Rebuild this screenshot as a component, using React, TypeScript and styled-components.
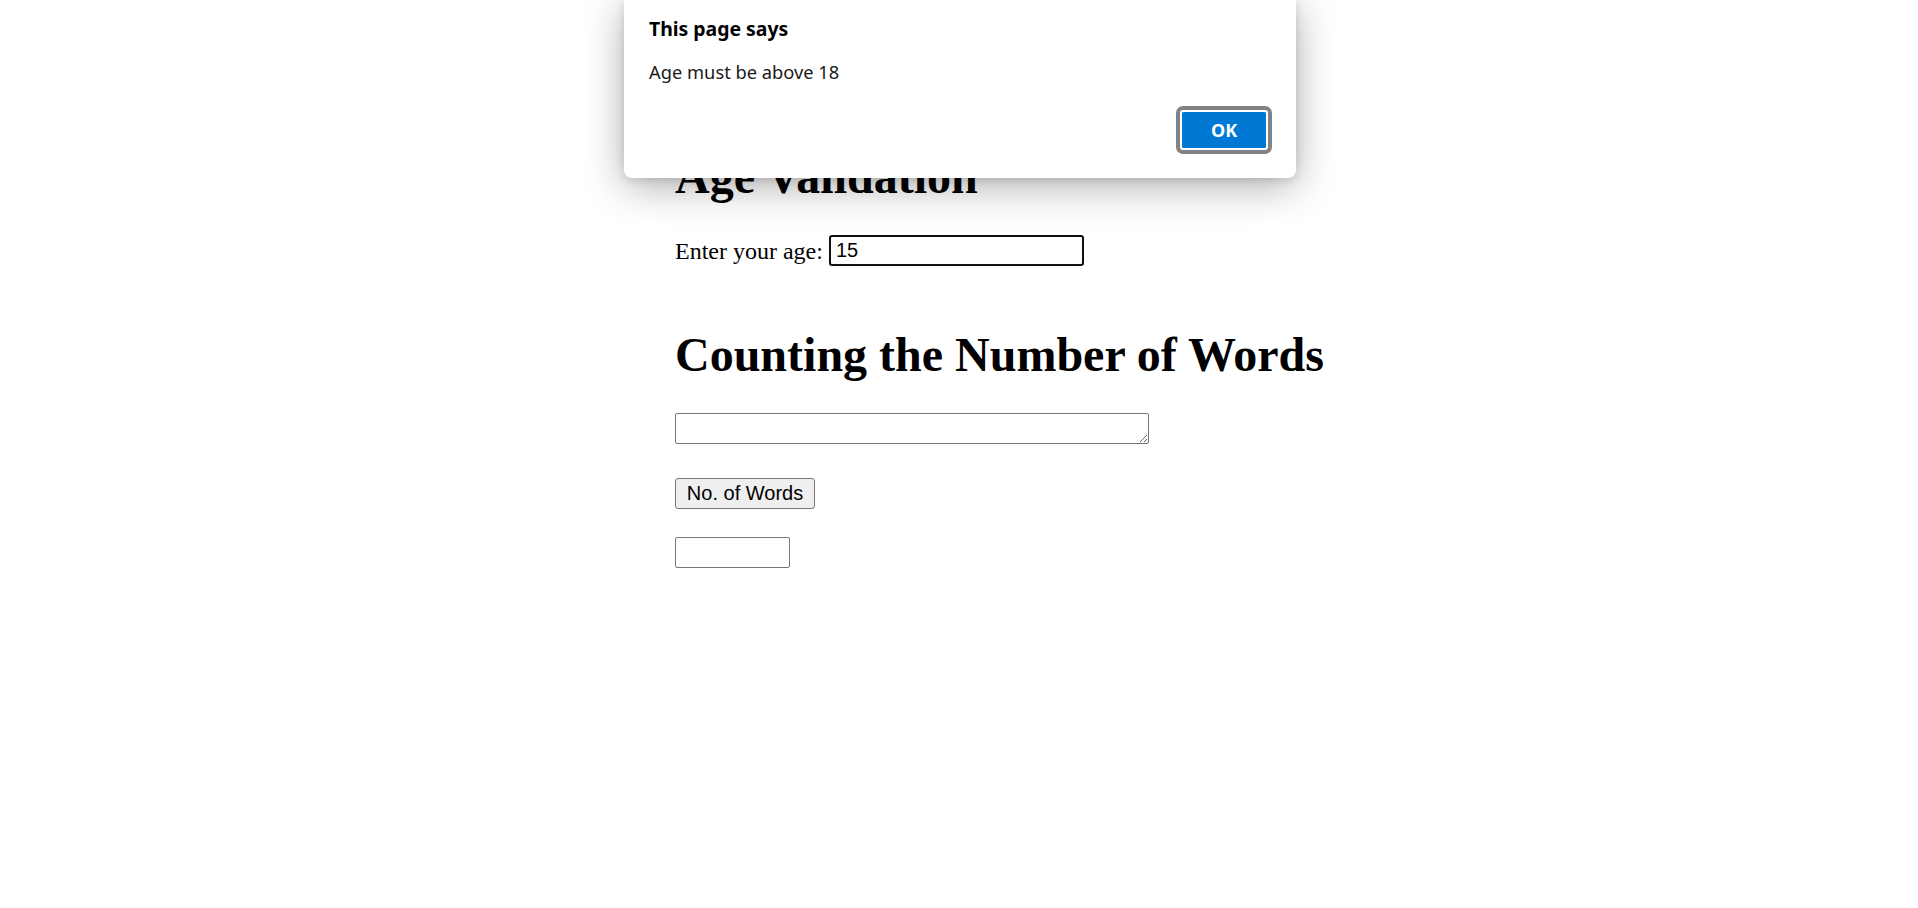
import React from "react";
import styled, { createGlobalStyle } from "styled-components";

const GlobalStyle = createGlobalStyle`
  html, body {
    margin: 0;
    padding: 0;
    background: #ffffff;
  }
  body {
    font-family: "Liberation Serif", "Times New Roman", serif;
    color: #000000;
  }
`;

const Page = styled.div`
  position: relative;
  width: 1918px;
  height: 908px;
  overflow: hidden;
  background: #ffffff;
`;

const Main = styled.main`
  margin-left: 675px;
  padding-top: 150px;
  display: flex;
  flex-direction: column;
  align-items: flex-start;
`;

const Heading = styled.h1`
  font-family: "Liberation Serif", "Times New Roman", serif;
  font-size: 48px;
  font-weight: bold;
  line-height: 53px;
  margin: 0 0 32px 0;
`;

const AgeRow = styled.div`
  display: flex;
  align-items: center;
  gap: 6px;
  height: 31px;
  margin-bottom: 62px;
  font-size: 24px;
`;

const Label = styled.label`
  font-family: "Liberation Serif", "Times New Roman", serif;
  font-size: 24px;
  line-height: 28px;
`;

const AgeInput = styled.input`
  box-sizing: border-box;
  width: 255px;
  height: 31px;
  border: 2px solid #101010;
  border-radius: 3px;
  padding: 0 5px;
  font-family: "Liberation Sans", Arial, sans-serif;
  font-size: 20px;
  color: #000;
  outline: none;
`;

const WordsArea = styled.textarea`
  display: block;
  box-sizing: border-box;
  width: 474px;
  height: 31px;
  border: 1px solid #767676;
  border-radius: 2px;
  padding: 2px 3px;
  margin: 0 0 34px 0;
  font-family: "Liberation Mono", monospace;
  font-size: 20px;
  outline: none;
`;

const CountButton = styled.button`
  display: block;
  box-sizing: border-box;
  width: 140px;
  height: 31px;
  margin: 0 0 28px 0;
  padding: 0;
  border: 1px solid #767676;
  border-radius: 3px;
  background: #efefef;
  color: #000;
  font-family: "Liberation Sans", Arial, sans-serif;
  font-size: 20px;
  text-align: center;
`;

const ResultInput = styled.input`
  display: block;
  box-sizing: border-box;
  width: 115px;
  height: 31px;
  border: 1px solid #767676;
  border-radius: 2px;
  padding: 0 3px;
  font-family: "Liberation Sans", Arial, sans-serif;
  font-size: 20px;
  outline: none;
`;

const Dialog = styled.div`
  position: absolute;
  left: 624px;
  top: 0;
  width: 672px;
  height: 178px;
  box-sizing: border-box;
  background: #ffffff;
  border-radius: 0 0 8px 8px;
  box-shadow: 0 8px 40px rgba(0, 0, 0, 0.32), 0 2px 8px rgba(0, 0, 0, 0.12);
  padding: 14px 24px 24px 25px;
  display: flex;
  flex-direction: column;
  font-family: "Noto Sans", "Open Sans", sans-serif;
  color: #000;
`;

const DialogTitle = styled.div`
  font-size: 19.4px;
  font-weight: 700;
  line-height: 30px;
`;

const DialogMessage = styled.div`
  margin-top: 14px;
  font-size: 18.3px;
  font-weight: 400;
  line-height: 28px;
  color: #1a1a1a;
`;

const DialogFooter = styled.div`
  margin-top: auto;
  display: flex;
  justify-content: flex-end;
`;

const OkButton = styled.button`
  box-sizing: border-box;
  width: 88px;
  height: 40px;
  margin: 4px;
  border: 2px solid #ffffff;
  border-radius: 3px;
  outline: 4px solid #808285;
  outline-offset: 0;
  background: #0078d4;
  background-clip: padding-box;
  color: #ffffff;
  font-family: "Noto Sans", "Open Sans", sans-serif;
  font-size: 18px;
  font-weight: 700;
  padding: 0;
`;

export default function App() {
  return (
    <Page>
      <GlobalStyle />
      <Main>
        <Heading>Age Validation</Heading>
        <AgeRow>
          <Label htmlFor="age">Enter your age:</Label>
          <AgeInput id="age" type="text" defaultValue="15" />
        </AgeRow>
        <Heading>Counting the Number of Words</Heading>
        <WordsArea />
        <CountButton>No. of Words</CountButton>
        <ResultInput type="text" />
      </Main>
      <Dialog>
        <DialogTitle>This page says</DialogTitle>
        <DialogMessage>Age must be above 18</DialogMessage>
        <DialogFooter>
          <OkButton>OK</OkButton>
        </DialogFooter>
      </Dialog>
    </Page>
  );
}
